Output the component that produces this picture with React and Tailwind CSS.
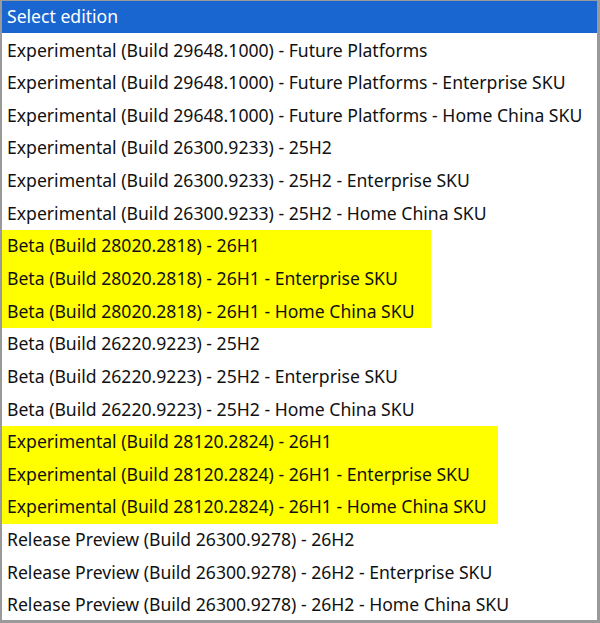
import React from 'react';

const groups = [
  {
    hl: false,
    items: [
      'Experimental (Build 29648.1000) - Future Platforms',
      'Experimental (Build 29648.1000) - Future Platforms - Enterprise SKU',
      'Experimental (Build 29648.1000) - Future Platforms - Home China SKU',
      'Experimental (Build 26300.9233) - 25H2',
      'Experimental (Build 26300.9233) - 25H2 - Enterprise SKU',
      'Experimental (Build 26300.9233) - 25H2 - Home China SKU',
    ],
  },
  {
    hl: true,
    width: 'w-[429px]',
    items: [
      'Beta (Build 28020.2818) - 26H1',
      'Beta (Build 28020.2818) - 26H1 - Enterprise SKU',
      'Beta (Build 28020.2818) - 26H1 - Home China SKU',
    ],
  },
  {
    hl: false,
    items: [
      'Beta (Build 26220.9223) - 25H2',
      'Beta (Build 26220.9223) - 25H2 - Enterprise SKU',
      'Beta (Build 26220.9223) - 25H2 - Home China SKU',
    ],
  },
  {
    hl: true,
    width: 'w-[496px]',
    items: [
      'Experimental (Build 28120.2824) - 26H1',
      'Experimental (Build 28120.2824) - 26H1 - Enterprise SKU',
      'Experimental (Build 28120.2824) - 26H1 - Home China SKU',
    ],
  },
  {
    hl: false,
    items: [
      'Release Preview (Build 26300.9278) - 26H2',
      'Release Preview (Build 26300.9278) - 26H2 - Enterprise SKU',
      'Release Preview (Build 26300.9278) - 26H2 - Home China SKU',
    ],
  },
];

const Row = ({ text }) => (
  <div className="h-[32.65px] flex items-center pl-[5px] whitespace-nowrap text-[#111]">
    {text}
  </div>
);

export default function App() {
  return (
    <div
      className="w-[600px] h-[623px] bg-white border-l-[2px] border-t border-r-[3px] border-b-[3px] border-[#9a9a9a] overflow-hidden text-[17.6px] leading-none"
      style={{ fontFamily: '"Noto Sans", "Open Sans", sans-serif' }}
    >
      <div className="h-[32px] bg-[#1a66d0] text-white text-[17.6px] flex items-center pl-[5px]">
        Select edition
      </div>
      <div className="pt-[1px]">
        {groups.map((g, i) =>
          g.hl ? (
            <div key={i} className={`${g.width} bg-[#ffff00]`}>
              {g.items.map((t) => (
                <Row key={t} text={t} />
              ))}
            </div>
          ) : (
            <div key={i}>
              {g.items.map((t) => (
                <Row key={t} text={t} />
              ))}
            </div>
          )
        )}
      </div>
    </div>
  );
}
